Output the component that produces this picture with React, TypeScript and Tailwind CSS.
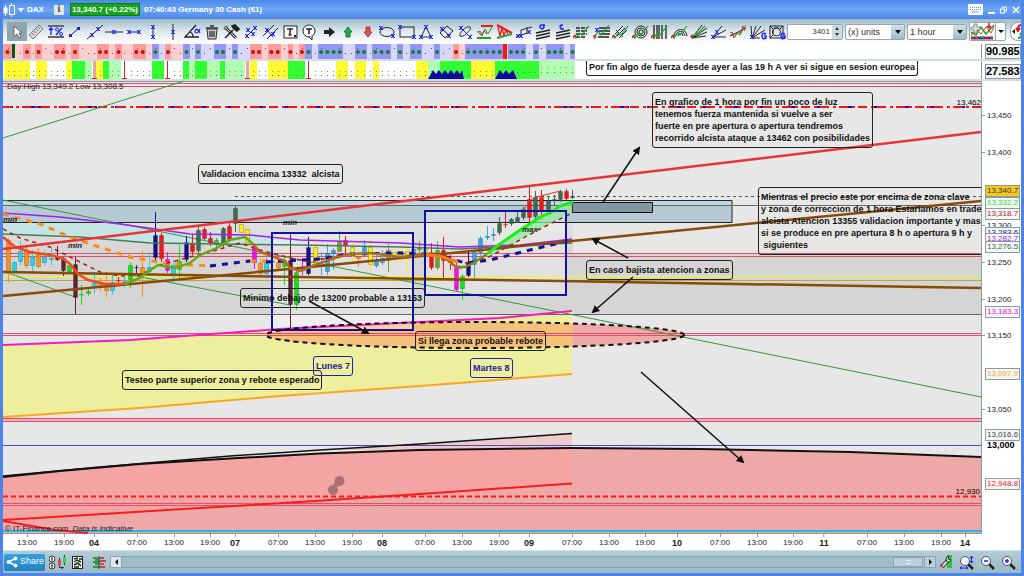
import type { ReactNode } from "react";
import { useState } from "react";

const PLOT = { x: 3, y: 81, w: 978, h: 453 };

const left = (x: number) => `${((x - PLOT.x) / PLOT.w) * 100}%`;
const top = (y: number) => `${((y - PLOT.y) / PLOT.h) * 100}%`;

// ── Toolbar glyphs ──────────────────────────────────────────────
const K = "#222";
const B = "#1a22ff";
const G = "#17a52a";
const R = "#f01818";

const Node = ({ x, y }: { x: number; y: number }) => (
  <path d={`M${x - 2} ${y - 2}l4 4M${x + 2} ${y - 2}l-4 4M${x} ${y - 2}v4`} stroke={B} strokeWidth="1" />
);

const Zig = ({ d = "M0 14l2-2 1 2 3-5 3 2 7-9" }: { d?: string }) => (
  <>
    <path d={d} stroke={G} strokeWidth="1.2" />
    <path d="M0 13l2-2 1 3" stroke={R} strokeWidth="1.2" />
  </>
);

const TOOLS: { name: string; art: ReactNode }[] = [
  { name: "Pointer", art: <path d="M6 2v11l3-3 2 4 2-1-2-4h3z" fill="#fff" stroke="#666" /> },
  {
    name: "Ruler",
    art: (
      <>
        <path d="M2 11L12 1l4 4L6 15z" fill="#d6d6d6" stroke="#777" />
        <path d="M5 9l2 2M7 7l2 2M9 5l2 2M11 3l2 2" stroke="#777" />
      </>
    ),
  },
  {
    name: "Percentage",
    art: (
      <>
        <path d="M1 2h16M1 13h16" stroke="#666" strokeWidth="2" />
        <path d="M4 4v7M2 6l2-2 2 2M9 11l6-7" stroke={B} strokeWidth="1.3" />
        <circle cx="10" cy="5.500" r="1.500" stroke={B} />
        <circle cx="14" cy="10" r="1.500" stroke={B} />
      </>
    ),
  },
  { name: "Segment", art: <><path d="M5 11l8-7" stroke={K} /><path d="M3 10h3v3H3zM11 3h3v3h-3z" fill={B} /></> },
  { name: "Line", art: <><path d="M1 15L17 1" stroke={K} /><Node x={6} y={11} /><Node x={12} y={5} /></> },
  { name: "Horizontal line", art: <><path d="M0 8h18" stroke={K} /><Node x={9} y={8} /></> },
  { name: "Horizontal segment", art: <><path d="M4 8h10" stroke={K} /><Node x={4} y={8} /><Node x={14} y={8} /></> },
  { name: "Vertical segment", art: <><path d="M9 3v10" stroke={K} /><Node x={9} y={3} /><Node x={9} y={13} /></> },
  { name: "Vertical line", art: <><path d="M9 0v16" stroke={K} /><Node x={9} y={8} /></> },
  {
    name: "Angle",
    art: (
      <>
        <path d="M13 1L2 13h14M7 8q3 1 3 5" stroke={K} strokeWidth="1.3" />
        <path d="M17 5c-3 6-5 4-5 2s3-3 5 2" stroke={B} strokeWidth="1.2" />
      </>
    ),
  },
  {
    name: "Delete",
    art: (
      <>
        <path d="M4 5h10l-1 10H5z" fill="#ccc" stroke="#333" />
        <path d="M3 4h12M7 2h4M7 7v6M9 7v6M11 7v6" stroke="#333" strokeWidth="1.3" />
      </>
    ),
  },
  {
    name: "Settings",
    art: (
      <>
        <path d="M4 4l10 10" stroke="#333" strokeWidth="3" />
        <path d="M4 4l10 10" stroke="#ddd" />
        <path d="M10 2l3-1 4 4-2 2-3-2zM11 6l-8 8" fill={K} stroke={K} strokeWidth="1.600" />
        <path d="M2 5q0-3 3-3v3z" fill="#ccc" stroke="#555" />
      </>
    ),
  },
  { name: "Regression", art: <><path d="M3 14L15 2" stroke={K} /><Node x={6} y={6} /><Node x={13} y={4} /><Node x={5} y={12} /><Node x={11} y={10} /></> },
  { name: "Channel", art: <><path d="M2 12L13 1M6 15L17 4" stroke={K} /><path d="M6 6l6 7" stroke={B} /><Node x={6} y={6} /><Node x={12} y={10} /></> },
  {
    name: "Text",
    art: (
      <>
        <rect x="3" y="2" width="13" height="12" fill="#fff" stroke={K} />
        <path d="M6 5h6M9 5v6M7.500 11h3" stroke={K} strokeWidth="1.500" />
        <path d="M13 12h2" stroke={K} strokeWidth="2" />
      </>
    ),
  },
  {
    name: "Balloon",
    art: (
      <>
        <circle cx="9" cy="7" r="6" fill="#fff" stroke={K} />
        <path d="M9 13l3 3v-4" fill="#fff" stroke={K} />
        <path d="M6 5h6M9 5v5" stroke={K} strokeWidth="1.600" />
      </>
    ),
  },
  { name: "Right arrow", art: <path d="M4 6h5V3l6 5-6 5v-3H4z" fill={K} /> },
  { name: "Up arrow", art: <path d="M9 3l4 5h-2v5H7V8H5z" fill="#22b04a" stroke="#157a30" /> },
  { name: "Down arrow", art: <path d="M9 13l4-5h-2V3H7v5H5z" fill="#e0505c" stroke="#b03040" /> },
  { name: "Ellipse", art: <><ellipse cx="9" cy="8" rx="7" ry="4.500" stroke={K} /><Node x={3} y={4} /><Node x={15} y={12} /></> },
  { name: "Rectangle", art: <><rect x="2" y="3" width="14" height="10" stroke={K} /><Node x={2} y={3} /><Node x={16} y={13} /></> },
  { name: "Triangle", art: <><path d="M9 3l5 10H4z" stroke={K} /><Node x={9} y={3} /><Node x={14} y={13} /><Node x={4} y={13} /></> },
  { name: "Rotated rectangle", art: <><path d="M10 2l6 5-8 7-5-5zM5 5l8 7" stroke={K} /><Node x={5} y={5} /><Node x={12} y={12} /></> },
  { name: "Rotated ellipse", art: <><path d="M14 3c2 2-2 5-4 7s-5 3-6 2 1-4 3-6 5-4 7-3z" stroke={K} /><path d="M5 4l9 9" stroke={B} /><Node x={5} y={4} /><Node x={14} y={13} /></> },
  { name: "Auto trend", art: <><path d="M5 2h12" stroke={R} strokeWidth="2" /><path d="M1 14h14" stroke={G} strokeWidth="2" /><path d="M1 8l3-1 2 5 3-7 3 5 4-7" stroke={G} /><path d="M2 8l3 3 3-4 3 3" stroke={R} /></> },
  { name: "Auto triangle", art: <><path d="M2 1l15 8" stroke={R} strokeWidth="2" /><path d="M2 14l15-4" stroke={G} strokeWidth="2" /><path d="M3 3l2 9 2-8 2 7 2-5 2 4" stroke={R} strokeWidth="1.300" /></> },
  { name: "Parallel segments", art: <><path d="M6 6l11-3M1 13l11-4M6 6v6M12 3v6" stroke={K} /><Node x={6} y={12} /><Node x={14} y={8} /><Node x={3} y={12} /></> },
  { name: "Standard deviation", art: <><path d="M2 9l14-3M2 12l14-3M2 15l14-3" stroke={K} strokeWidth="1.300" /><path d="M11 1H7a2 2 0 1 0 2 0" stroke={B} strokeWidth="1.500" /></> },
  { name: "Standard error", art: <><path d="M2 9l14-3M2 12l14-3M2 15l14-3" stroke={K} strokeWidth="1.300" /><path d="M9 1H7q-2 1 0 2-2 1 0 2h3" stroke={B} strokeWidth="1.300" /></> },
  { name: "Fibonacci retracement", art: <><path d="M3 4h11M3 7h11M3 10h11M3 13h9" stroke={K} strokeWidth="1.300" strokeDasharray="4 1" /><Zig /></> },
  { name: "Fibonacci extension", art: <><path d="M6 4h11M6 7h11M6 10h11M5 13h11" stroke={K} strokeWidth="1.300" /><Zig d="M1 15l4-8 3 4 8-10" /><Node x={4} y={6} /></> },
  { name: "Fibonacci channel", art: <><path d="M3 10l8-8M5 12l8-8M7 14l8-8M4 6l7 7" stroke={K} /><Zig /></> },
  { name: "Fibonacci circles", art: <><circle cx="9" cy="8" r="6" stroke={K} /><circle cx="9" cy="8" r="4" stroke={K} /><circle cx="9" cy="8" r="2" stroke={K} /><Zig /></> },
  { name: "Fibonacci time zones", art: <><path d="M3 1v14M6 1v14M8 1v14M11 1v14M15 1v14" stroke={K} strokeWidth="1.300" /><Zig /></> },
  { name: "Fibonacci arcs", art: <><path d="M3 12a6 6 0 0 1 13 0M5 12a4 4 0 0 1 9 0M7 12a2 2 0 0 1 5 0" stroke={K} /><Zig /></> },
  { name: "Fibonacci fan", art: <><path d="M2 14L12 1M2 14L17 4M2 14l15-6M2 14l14-2" stroke={K} /><Zig d="M1 14l5-5 1 1L15 2" /></> },
  { name: "Pitchfork", art: <><path d="M3 13L12 2M3 13l13-7M3 13h13" stroke={K} /><Node x={3} y={13} /><Node x={7} y={8} /></> },
  { name: "Linear regression", art: <><path d="M1 12L17 4" stroke={K} /><path d="M1 9l2-1 2 6 3-5 3 2 3-9 2 5" stroke={R} /><path d="M2 10l3 3 4-5 3 1 5-8" stroke={G} /></> },
  { name: "Gann fan", art: <><path d="M3 14L2 2M3 14L7 2M3 14l9-12M3 14l13-8M3 14h8" stroke={K} /><path d="M17 10q-4-2-4 2t4 2v-2h-2" stroke={B} strokeWidth="1.500" /><Node x={3} y={13} /></> },
  { name: "Gann square", art: <><rect x="2" y="2" width="13" height="12" stroke={K} /><circle cx="8.500" cy="8" r="4" stroke={K} /><path d="M2 2l3 3M15 2l-3 3M2 14l3-3M6 4h5M5 6v4" stroke={K} /><path d="M17 10q-4-2-4 2t4 2v-2h-2" stroke={B} strokeWidth="1.500" /></> },
];

// ── Series ──────────────────────────────────────────────────────
const C = {
  o: "#f8921e", c: "#22d3ee", s: "#2fa8e8", b: "#5a2433", l: "#12e312", r: "#f81414", m: "#f012e8",
  n: "#10108c", d: "#3f6b4c", y: "#f8f010", g: "#6aa534",
};

type Candle = [x: number, high: number, low: number, open: number, close: number, tone: keyof typeof C];

const CANDLES: Candle[] = [
  [8, 238, 283, 240, 272, "o"], [14, 261, 273, 262, 272, "c"], [20, 241, 265, 251, 262, "c"],
  [26, 247, 268, 251, 266, "o"], [32, 250, 272, 257, 266, "c"], [38, 248, 268, 254, 267, "o"],
  [44, 250, 265, 257, 263, "c"], [51, 248, 265, 258, 260, "c"], [57, 246, 261, 256, 260, "b"],
  [63, 257, 276, 258, 271, "b"], [69, 263, 273, 265, 272, "l"], [75, 257, 314, 264, 298, "b"],
  [81, 285, 305, 294, 295, "l"], [88, 289, 296, 291, 294, "l"], [94, 272, 294, 283, 288, "c"],
  [100, 278, 291, 283, 287, "o"], [106, 276, 297, 286, 291, "o"], [112, 274, 295, 282, 291, "c"],
  [118, 277, 286, 280, 281, "r"], [124, 276, 288, 281, 283, "c"], [130, 262, 288, 265, 280, "l"],
  [136, 265, 275, 267, 268, "b"], [142, 251, 297, 267, 275, "o"], [149, 252, 275, 267, 272, "c"],
  [155, 212, 260, 235, 258, "n"], [161, 233, 262, 235, 259, "r"], [167, 252, 273, 259, 271, "m"],
  [173, 260, 283, 265, 275, "c"], [179, 245, 278, 261, 270, "l"], [186, 236, 262, 242, 260, "n"],
  [192, 234, 255, 243, 252, "r"], [198, 226, 253, 230, 251, "d"], [204, 227, 240, 229, 239, "r"],
  [210, 232, 246, 238, 244, "r"], [216, 238, 251, 240, 245, "g"], [223, 227, 248, 228, 245, "d"],
  [229, 222, 242, 226, 240, "r"], [235, 206, 232, 208, 224, "d"], [241, 223, 233, 224, 233, "y"],
  [247, 226, 248, 229, 243, "y"], [254, 245, 269, 246, 263, "m"], [260, 259, 276, 263, 274, "o"],
  [266, 258, 275, 261, 274, "c"], [272, 259, 269, 261, 262, "b"], [278, 258, 270, 262, 268, "o"],
  [284, 255, 285, 260, 267, "l"], [290, 232, 330, 260, 305, "b"], [296, 268, 310, 272, 305, "l"],
  [302, 258, 275, 270, 271, "m"], [308, 237, 275, 247, 274, "n"], [315, 237, 265, 247, 263, "y"],
  [321, 252, 275, 258, 259, "s"], [327, 244, 275, 253, 272, "s"], [333, 248, 270, 250, 254, "s"],
  [339, 231, 252, 241, 252, "g"], [345, 236, 256, 240, 246, "r"], [352, 243, 262, 247, 256, "y"],
  [358, 252, 267, 256, 259, "o"], [364, 240, 256, 247, 252, "s"], [370, 240, 270, 247, 265, "y"],
  [376, 252, 268, 260, 266, "s"], [382, 250, 265, 258, 263, "s"], [388, 244, 272, 250, 261, "g"],
  [394, 246, 263, 252, 257, "y"], [400, 244, 262, 251, 258, "y"], [407, 248, 272, 251, 255, "y"],
  [413, 245, 260, 249, 252, "s"], [419, 241, 255, 248, 250, "g"], [425, 244, 258, 249, 255, "y"],
  [431, 243, 270, 252, 268, "r"], [437, 241, 270, 250, 268, "g"], [443, 237, 279, 250, 261, "r"],
  [450, 255, 270, 260, 263, "r"], [456, 262, 292, 267, 290, "m"], [462, 274, 300, 276, 289, "l"],
  [468, 250, 277, 262, 276, "n"], [474, 250, 278, 252, 265, "s"], [480, 236, 262, 238, 253, "s"],
  [487, 226, 240, 236, 238, "s"], [493, 228, 241, 234, 236, "s"], [499, 217, 235, 223, 233, "d"],
  [505, 212, 228, 224, 225, "r"], [511, 218, 226, 219, 224, "d"], [517, 212, 223, 217, 222, "d"],
  [523, 207, 220, 209, 218, "d"], [529, 186, 222, 199, 218, "r"], [535, 191, 220, 197, 217, "d"],
  [541, 190, 220, 197, 212, "r"], [548, 197, 215, 200, 211, "d"], [554, 195, 205, 199, 200, "d"],
  [560, 190, 202, 191, 200, "d"], [566, 189, 200, 191, 199, "r"], [572, 190, 199, 196, 198, "d"],
];

// Pairs of thin parallel levels that cross the whole plot.
const RED_LEVELS = [83, 86, 253, 256, 333, 335, 418, 421, 503, 505];

const TIMES: [number, string][] = [
  [27, "13:00"], [64, "19:00"], [94, "04"], [137, "07:00"], [174, "13:00"], [210, "19:00"], [235, "07"],
  [278, "07:00"], [315, "13:00"], [352, "19:00"], [382, "08"], [425, "07:00"], [462, "13:00"], [499, "19:00"],
  [529, "09"], [572, "07:00"], [609, "13:00"], [645, "19:00"], [677, "10"], [720, "07:00"], [757, "13:00"],
  [793, "19:00"], [824, "11"], [867, "07:00"], [904, "13:00"], [941, "19:00"], [965, "14"],
];

const PRICES: [number, string][] = [
  [115, "13,450"], [152, "13,400"], [225, "13,300"], [262, "13,250"], [299, "13,200"], [335, "13,150"], [409, "13,050"],
];

const TAGS: [number, string, string][] = [
  [232, "13,283.6", "#2020a0"], [238, "13,282.7", "#a020f0"], [246, "13,276.5", "#3f6b3f"],
  [202, "13,332.2", "#2fe02f"], [213, "13,318.7", "#c01818"], [190, "13,340.7", "#333333"],
  [311, "13,183.3", "#f012d0"], [373, "13,097.9", "#ffa520"], [434, "13,016.6", "#444444"], [483, "12,948.8", "#ff1a1a"],
];

type NoteData = { x: number; y: number; lines: string[]; blue?: boolean };

const NOTES: NoteData[] = [
  { x: 652, y: 92, lines: ["En grafico de 1 hora por fin un poco de luz", "tenemos fuerza mantenida si vuelve a ser", "fuerte en pre apertura o apertura tendremos", "recorrido alcista ataque a 13462 con posibilidades"] },
  { x: 198, y: 164, lines: ["Validacion encima 13332  alcista"] },
  { x: 758, y: 187, lines: ["Mientras el precio este por encima de zona clave", "y zona de correccion de 1 hora Estariamos en trade", "alcista Atencion 13355 validacion importante y mas", "si se produce en pre apertura 8 h o apertura 9 h y", " siguientes"] },
  { x: 586, y: 260, lines: ["En caso bajista atencion a zonas"] },
  { x: 240, y: 288, lines: ["Minimo debajo de 13200 probable a 13153"] },
  { x: 415, y: 331, lines: ["Si llega zona probable rebote"] },
  { x: 313, y: 356, lines: ["Lunes 7"], blue: true },
  { x: 470, y: 358, lines: ["Martes 8"], blue: true },
  { x: 122, y: 370, lines: ["Testeo parte superior zona y rebote esperado"] },
];

const SWINGS: [number, number, string][] = [[3, 220, "min"], [68, 246, "min"], [283, 223, "min"], [522, 230, "max"]];

type Seg = [number, number, string];

const TREND: Seg[] = [
  [3, 12, "R"], [23, 31, "R"], [35, 42, "R"], [54, 66, "R"], [71, 79, "R"], [97, 109, "R"], [115, 122, "R"],
  [133, 146, "R"], [152, 159, "B"], [165, 171, "R"], [183, 190, "B"], [195, 201, "B"], [214, 226, "B"],
  [232, 238, "B"], [250, 262, "R"], [268, 281, "R"], [288, 293, "R"], [299, 305, "R"], [305, 312, "B"],
  [318, 343, "B"], [355, 367, "B"], [372, 391, "B"], [397, 403, "B"], [410, 422, "B"], [434, 440, "B"],
  [453, 459, "R"], [465, 503, "B"], [508, 526, "B"], [533, 539, "B"], [546, 564, "B"], [570, 575, "B"],
];

const PHASES: Seg[] = [
  [4, 30, "y"], [36, 47, "y"], [66, 72, "y"], [72, 85, "g"], [85, 92, "l"], [96, 103, "y"], [103, 109, "g"],
  [109, 121, "l"], [152, 164, "g"], [183, 189, "g"], [189, 195, "l"], [195, 207, "g"], [207, 220, "l"],
  [220, 225, "g"], [225, 245, "l"], [250, 257, "y"], [268, 288, "y"], [288, 305, "g"], [336, 348, "y"],
  [355, 366, "y"], [373, 379, "y"], [416, 428, "y"], [428, 440, "l"], [440, 471, "g"], [471, 495, "y"],
  [495, 539, "g"], [539, 575, "l"],
];

const PHASE_FILL: Record<string, string> = { y: "#fffb30", g: "#32ff32", l: "#b0ffb0" };

const BARS = Array.from({ length: 93 }, (_, i) => Math.round(8 + i * 6.13));

function TrendStrip() {
  return (
    <svg viewBox="3 44 978 15" preserveAspectRatio="none" className="absolute inset-0 h-full w-full">
      <rect x="3" y="44" width="149" height="15" fill="#fbcfcf" />
      <rect x="152" y="44" width="422" height="15" fill="#d7d7fb" />
      <path d="M165 44h18v15h-18zM250 44h55v15h-55zM453 44h12v15h-12z" fill="#fbcfcf" />
      {TREND.map(([a, b, k]) => (
        <rect key={a} x={a} y="44" width={b - a} height="15" fill={k === "R" ? "#fd9c9c" : "#9494fb"} />
      ))}
      {BARS.map((x, i) => (
        <path key={x} d={`M${x} ${i % 3 === 0 ? 48 : 53}h1v1h-1z`} fill={x < 152 ? "#b04040" : "#703080"} />
      ))}
      {TREND.flatMap(([a, b, k]) => {
        const n = Math.max(1, Math.round((b - a) / 6.13));
        return Array.from({ length: n }, (_, i) => (
          <ellipse key={`${a}-${i}`} cx={a + ((i + 0.5) * (b - a)) / n} cy="52" rx="2" ry="2" fill={k === "R" ? "#c81010" : "#0a8a1a"} />
        ));
      })}
      <path d="M12 44h3v14h-3z" fill="#0a5a14" />
      <rect x="503" y="44" width="4" height="15" fill="#ff1010" />
    </svg>
  );
}

function PhaseStrip() {
  return (
    <svg viewBox="3 61 978 18" preserveAspectRatio="none" className="absolute inset-0 h-full w-full">
      {PHASES.map(([a, b, k]) => (
        <rect key={a} x={a} y="61" width={b - a} height="18" fill={PHASE_FILL[k]} />
      ))}
      {BARS.map((x, i) => (
        <g key={x}>
          <rect x={x} y={i > 80 ? 67 : 71} width="1" height="1" fill={i % 4 < 2 ? "#e86820" : "#30c8b0"} />
          <rect x={x} y={i > 80 ? 72 : 75} width="1" height="1" fill={i % 5 < 3 ? "#c86020" : "#208040"} />
        </g>
      ))}
      <path d="M93 61h3v18h-3zM246 61h3v18h-3z" fill="#f0a0a0" />
      <path d="M124.500 61v18M167.500 61v18M308.500 61v18M92 78.500h5M122 78.500h5M165 78.500h5M245 78.500h5M306 78.500h5" stroke="#c02828" />
      <path d="M428 79l5-9 3 4 3-4 3 4 3-4 3 4 3-4 3 4 3-4 3 4 2-4 2 9zM495 79l5-9 3 4 3-4 3 4 4-4 4 9z" fill="#0c0c9c" />
    </svg>
  );
}

function PriceDrawing() {
  return (
    <svg viewBox="3 81 978 453" preserveAspectRatio="none" fill="none" className="absolute inset-0 h-full w-full">
      <defs>
        <marker id="head" viewBox="0 0 8 8" refX="6" refY="4" markerWidth="8" markerHeight="8" markerUnits="userSpaceOnUse" orient="auto">
          <path d="M0 0l8 4-8 4z" fill="#111" />
        </marker>
        <clipPath id="past"><rect x="3" y="81" width="570" height="453" /></clipPath>
        <clipPath id="future"><rect x="573" y="81" width="408" height="453" /></clipPath>
        <linearGradient id="band" x1="0" y1="0" x2="0" y2="1">
          <stop offset="0" stopColor="#e0e0e0" />
          <stop offset="1" stopColor="#d4d4d4" />
        </linearGradient>
      </defs>

      {/* zones */}
      <rect x="3" y="223" width="570" height="34" fill="url(#band)" />
      <rect x="3" y="254" width="978" height="60" fill="#d5d5d5" />
      <path d="M3 212L60 217 120 224 160 231 190 234 250 235 310 241 300 245 220 244 150 243 80 237 3 234z" fill="#c4e5e4" />
      <rect x="3" y="201" width="729" height="5" fill="#bcd8e2" />
      <rect x="3" y="206" width="729" height="16" fill="#b6cad4" />
      <path d="M3 345L130 340 280 329 400 323 572 311V374L420 386 280 396 140 408 3 417z" fill="#eeee9f" />
      <path d="M3 477L60 471 140 464 230 458 420 450 572 448 700 449 850 452 981 457V534H3z" fill="#efa8a8" />
      <path d="M3 477L60 471 140 464 230 458 420 450 572 448V484L420 494 300 502 200 508 70 516 3 520z" fill="#f5a4a4" />
      <path d="M320 450L420 444 572 433V448L420 450z" fill="#efcaca" />
      <ellipse cx="475" cy="335" rx="209" ry="13" fill="#f5c07a" clipPath="url(#past)" />
      <ellipse cx="475" cy="335" rx="209" ry="13" fill="#f0a8a8" clipPath="url(#future)" />
      <rect x="272" y="233" width="141" height="97" fill="#fff" fillOpacity="0.3" />
      <rect x="425" y="211" width="141" height="84" fill="#fff" fillOpacity="0.3" />

      {/* levels */}
      <path d="M3 420H981" stroke="#efb4c0" strokeWidth="2" />
      {RED_LEVELS.map((y) => (
        <path key={y} d={`M3 ${y + 0.5}H981`} stroke="#df4f6c" />
      ))}
      <path d="M3 81.500H981M3 533.500H981" stroke="#8a9ba4" />
      <path d="M3 107H981" stroke="#1818a8" strokeWidth="2" strokeDasharray="10 18" />
      <path d="M3 107H981" stroke="#f01818" strokeWidth="2" strokeDasharray="9 4 3 3" />
      <path d="M235 196.500H981" stroke="#555" strokeDasharray="3 3" />
      <path d="M3 200.500H732V222.500H3" stroke="#222" />
      <path d="M3 205.500H981M3 314.500H981" stroke="#666" />
      <path d="M3 445.500H981" stroke="#4a4ac8" />
      <path d="M3 496.500H981" stroke="#ff1a1a" strokeWidth="2" strokeDasharray="5 3" />
      <path d="M3 531H981" stroke="#28b4e4" strokeWidth="2" />
      <path d="M3 280.500H981" stroke="#b8a840" />
      <path d="M3 276.500H981" stroke="#fafa10" />
      <path d="M572 202.500H652.500V212.500H572.500z" fill="#8496a0" stroke="#111" />

      {/* thin trend lines */}
      <path d="M3 138L184 81M3 200L981 397M3 271L75 297M130 275L290 305" stroke="#2f9a3a" />

      {/* candles */}
      {CANDLES.map(([x, high, low, a, b, tone]) => (
        <g key={x} stroke={C[tone]} fill={C[tone]}>
          <path d={`M${x + 0.5} ${high}V${low}`} />
          <rect x={x - 1.5} y={a + 0.5} width="4" height={Math.max(b - a - 1, 0.5)} stroke="#000" strokeOpacity="0.2" />
        </g>
      ))}

      {/* averages */}
      <path d="M487 258L500 245 520 230 535 222 540 217 550 213 572 202V212L540 229z" fill="#8ee89a" fillOpacity="0.750" />
      <path d="M3 213L60 217 120 224 190 234 250 235 300 240 400 243 460 247 520 245 572 239" stroke="#a020f0" strokeWidth="1.500" />
      <path d="M3 234L80 237 150 243 220 244 300 245 400 247 460 249 572 243" stroke="#4f7a58" strokeWidth="1.500" />
      <path d="M3 214L40 224 75 239 130 257 170 264 213 266M250 261h20" stroke="#ff8a10" strokeWidth="3" strokeDasharray="6 6" />
      <path d="M210 266L250 261M266 262L320 259 350 254 400 253 440 255 465 263 490 260 530 250 572 240" stroke="#10109c" strokeWidth="3" strokeDasharray="6 6" />
      <path d="M3 229L20 238 50 247 80 262 100 272 120 276 140 275 160 265 190 257 210 252 240 243 260 250 290 258 310 262 340 255M465 263L487 258 540 229 572 213" stroke="#a81818" strokeWidth="1.500" strokeDasharray="4 4" />
      <path d="M3 296L300 268 572 241 981 201M3 272L300 277 560 281 981 288" stroke="#8a4a08" strokeWidth="2.500" />
      <path d="M3 237L15 247 30 252 50 255 62 258 70 264 78 274 88 280 105 284 125 284" stroke="#f24a18" strokeWidth="2.500" />
      <path d="M125 284L140 278 150 270 158 265 175 268 190 263 200 255 215 249 230 240 245 237 252 243" stroke="#62aa14" strokeWidth="2.500" />
      <path d="M252 243L260 252 285 261 290 268 300 271" stroke="#c0641c" strokeWidth="2.500" />
      <path d="M300 271L315 265 335 258 350 254 370 253 400 257 430 254 445 258 455 266 462 268" stroke="#a8701c" strokeWidth="2.500" />
      <path d="M425 255L440 256 458 262" stroke="#ff7a14" strokeWidth="3" />
      <path d="M458 267L465 267 475 262 487 254" stroke="#7c8a14" strokeWidth="2.500" />
      <path d="M487 254L500 244 520 230 533 222 540 217 550 213 560 206 573 202" stroke="#18ee18" strokeWidth="3" />
      <path d="M523 210L533 198 560 191" stroke="#e03030" />
      <path d="M3 249L981 132" stroke="#e83434" strokeWidth="2.500" />
      <path d="M3 345L130 340 280 329 400 323 500 318 572 311" stroke="#f818c8" strokeWidth="2" />
      <path d="M3 417L140 408 280 396 420 386 572 374" stroke="#fba61c" strokeWidth="2" />
      <path d="M3 476L100 467 230 456 320 450 420 444 572 433.500" stroke="#111" strokeWidth="1.500" />
      <path d="M3 477L60 471 140 464 230 458.500 320 453.500 420 450 572 448 700 449 850 452 981 457" stroke="#111" strokeWidth="2" />
      <path d="M3 520L70 516 200 508 300 502 420 494 572 483.500M3 521L55 530 88 533" stroke="#f81c1c" strokeWidth="2" />

      {/* frames and arrows */}
      <path d="M272 233h141v97h-141zM425 211h141v84h-141z" stroke="#1010a0" strokeWidth="2" />
      <ellipse cx="475" cy="335" rx="209" ry="13" stroke="#111" strokeWidth="2" strokeDasharray="5 4" />
      <g stroke="#111" strokeWidth="1.500">
        <path d="M603 202L639 148" markerEnd="url(#head)" />
        <path d="M628 258L593 239" markerEnd="url(#head)" />
        <path d="M633 277L593 312" markerEnd="url(#head)" />
        <path d="M641 372L743 462" markerEnd="url(#head)" />
        <path d="M309 301L368 333" markerEnd="url(#head)" />
      </g>
      <path d="M340 476a5 5 0 1 1-1 10l-2 1a5 5 0 1 1-4-2l2-2a5 5 0 0 1 5-7z" fill="#a87272" />
    </svg>
  );
}

function Note({ note }: { note: NoteData }) {
  return (
    <p
      className={`absolute whitespace-pre rounded-[3px] border px-0.5 py-[3px] text-[9px] leading-3 font-bold ${
        note.blue ? "border-[#2222a0] text-[#1a1a9c]" : "border-[#222] text-[#111]"
      }`}
      style={{ left: left(note.x), top: top(note.y) }}
    >
      {note.lines.join("\n")}
    </p>
  );
}

function PriceAxis() {
  return (
    <div className="relative w-10 shrink-0 border-l border-[#8a9ba4] bg-white">
      {PRICES.map(([y, label]) => (
        <span key={label} className="absolute left-0 flex -translate-y-1/2 items-center gap-0.5 text-[8px] leading-3 text-[#222] before:h-px before:w-[3px] before:bg-[#8a9ba4]" style={{ top: top(y + 0.5) }}>
          {label}
        </span>
      ))}
      <span className="absolute left-[5px] -translate-y-1/2 text-[9px] leading-3 font-bold text-black" style={{ top: top(445) }}>13,000</span>
      {TAGS.map(([y, label, color]) => (
        <span
          key={label}
          className={`absolute left-[3px] -translate-y-1/2 border border-[#8a9ba4] px-px text-[8px] leading-[10px] ${label === "13,340.7" ? "bg-[#f5c91c]" : "bg-[#f4f6f6]"}`}
          style={{ top: top(y + 0.5), color }}
        >
          {label}
        </span>
      ))}
    </div>
  );
}

function TitleBar() {
  return (
    <header className="flex h-[19px] items-center bg-linear-to-b from-[#4a88e8] via-[#6ea6f8] to-[#4d86e6] text-[8px] font-bold text-white">
      <svg width="13" height="14" viewBox="0 0 13 14" fill="none" stroke="#fff">
        <path d="M2.500 2v11" /><rect x="1" y="5" width="3" height="5" fill="#fff" />
        <path d="M8.500 0v2M8.500 12v2" /><rect x="6.500" y="2.500" width="5" height="9" />
      </svg>
      <button type="button" aria-label="Open instrument menu" className="ml-0.5 border-x-[3px] border-t-[4px] border-x-transparent border-t-white" />
      <span className="ml-[3px]">DAX</span>
      <button type="button" aria-label="Information" className="ml-2.5 flex h-[10px] w-[10px] items-center justify-center bg-[#e4e4e4] font-serif text-[9px] text-[#333]">i</button>
      <span className="ml-1.5 border border-[#0c7c14] bg-[#16a41c] px-px leading-[11px]">13,340.7 (+0.22%)</span>
      <span className="ml-1">07:40:43 Germany 30 Cash (€1)</span>
      <div className="mr-px ml-auto flex items-center gap-[5px]">
        <button type="button" aria-label="Keyboard">
          <svg width="15" height="11" viewBox="0 0 15 11"><rect width="15" height="11" rx="1" fill="#fff" /><path d="M2 3.500h11M2 5.500h11" stroke="#5a90e8" strokeDasharray="1 1" /><path d="M4 8h7" stroke="#5a90e8" /></svg>
        </button>
        <button type="button" aria-label="Minimize">
          <svg width="7" height="8" viewBox="0 0 7 8"><path d="M0 7h7" stroke="#fff" strokeWidth="2" /></svg>
        </button>
        <button type="button" aria-label="Restore">
          <svg width="7" height="8" viewBox="0 0 7 8" fill="none" stroke="#fff"><path d="M2.500 2V1h4v4H5" /><rect x=".5" y="3" width="4" height="4" /></svg>
        </button>
        <button type="button" aria-label="Close">
          <svg width="8" height="8" viewBox="0 0 8 8"><path d="M1 1l6 6M7 1L1 7" stroke="#fff" strokeWidth="1.500" /></svg>
        </button>
      </div>
    </header>
  );
}

function Picker({ label, value, options }: { label: string; value: string; options: string[] }) {
  const [current, setCurrent] = useState(value);
  return (
    <div className="relative h-4 w-[60px]">
      <select aria-label={label} value={current} onChange={(e) => setCurrent(e.target.value)} className="block h-4 w-full appearance-none rounded-xs border border-[#93a7b1] bg-white pl-0.5 text-[9px] leading-3 text-[#333]">
        {options.map((o) => <option key={o}>{o}</option>)}
      </select>
      <span className="pointer-events-none absolute top-px right-px flex h-[14px] w-[13px] items-center justify-center bg-linear-to-b from-[#d2e2ea] to-[#9dbac8]">
        <span className="border-x-[3px] border-t-[4px] border-x-transparent border-t-[#111]" />
      </span>
    </div>
  );
}

function Toolbar() {
  const [tool, setTool] = useState("Pointer");
  const [units, setUnits] = useState("3401");
  return (
    <div className="flex h-[25px] items-center bg-linear-to-b from-[#9fbbc8] via-[#dfe9ee] to-white pl-1">
      <div className="flex min-w-0 flex-1">
        {TOOLS.map((t) => (
          <button
            key={t.name}
            type="button"
            aria-label={t.name}
            aria-pressed={tool === t.name}
            onClick={() => setTool(t.name)}
            className={`flex h-[19px] flex-1 items-center justify-center ${tool === t.name ? "bg-[#8fa5b0]" : ""}`}
          >
            <svg width="18" height="16" viewBox="0 0 18 16" fill="none">{t.art}</svg>
          </button>
        ))}
      </div>
      <div className="flex w-[234px] shrink-0 items-center gap-0.5">
        <div className="relative h-4 w-[56px]">
          <input aria-label="Number of units" value={units} onChange={(e) => setUnits(e.target.value)} className="block h-4 w-full rounded-xs border border-[#93a7b1] bg-white pr-3 text-right text-[8px] leading-3 text-[#333]" />
          <span className="pointer-events-none absolute top-px right-px flex h-[14px] w-[10px] flex-col items-center justify-evenly bg-[#c8dae2]">
            <span className="border-x-[2px] border-b-[3px] border-x-transparent border-b-[#333]" />
            <span className="border-x-[2px] border-t-[3px] border-x-transparent border-t-[#333]" />
          </span>
        </div>
        <Picker label="Unit type" value="(x) units" options={["(x) units", "days"]} />
        <Picker label="Timeframe" value="1 hour" options={["1 hour", "4 hours", "1 day"]} />
        <div className="flex h-[19px] rounded-xs border border-[#93a7b1] bg-white">
          <button type="button" aria-label="Add indicator">
            <svg width="25" height="17" viewBox="0 0 25 17" fill="none">
              <path d="M1 9l5 3 5-8 5 7 8-9" stroke="#22a02c" strokeWidth="1.500" />
              <path d="M1 13l5-7 5 5 5-7 5 6 3-6" stroke="#e83030" />
              <path d="M4 1h3v3h3v3H7v3H4V7H1V4h3z" fill="#ddd" stroke="#888" />
              <path d="M19 0v5M17 3l2 2 2-2" stroke="#e01818" strokeWidth="1.500" />
              <path d="M1 15h3M6 15h3M15 15h3M20 15h3" stroke="#e01818" strokeWidth="3" />
              <path d="M4 15h2M9 15h6M18 15h2" stroke="#1a32e0" strokeWidth="3" />
              <path d="M5 14h2M11 14h3" stroke="#18c028" strokeWidth="2" />
            </svg>
          </button>
          <button type="button" aria-label="Indicator list" className="flex w-[10px] items-center justify-center border-l border-[#93a7b1]">
            <span className="border-x-[3px] border-t-[3px] border-x-transparent border-t-[#111]" />
          </button>
        </div>
        <button type="button" aria-label="Trading panel" className="ml-0.5 flex h-[19px] flex-1 overflow-hidden rounded-l-lg border border-r-0 border-[#93a7b1] bg-white">
          <svg width="12" height="17" viewBox="0 0 12 17" fill="none" className="shrink-0">
            <path d="M4 6v5L1 8.500z" fill="#111" />
            <path d="M11 2q-4 0-4 4M5 5l2 3 2-3" stroke="#e01818" strokeWidth="2" />
            <path d="M7 15q4 0 4-4M9 12l2-3 1 3" stroke="#18a828" strokeWidth="2" />
          </svg>
        </button>
      </div>
    </div>
  );
}

function Magnifier({ children }: { children?: ReactNode }) {
  return (
    <svg width="15" height="15" viewBox="0 0 15 15" fill="none">
      <path d="M9 9l5 5" stroke="#222" strokeWidth="2.500" />
      <circle cx="6" cy="6" r="4.500" fill="#f0f4f6" stroke="#555" />
      {children}
    </svg>
  );
}

function Footer() {
  return (
    <footer className="flex h-[23px] items-center border-t border-[#d6e2e8] bg-linear-to-b from-[#b2ccd8] to-[#9cb9c6] px-px">
      <button type="button" className="flex h-[17px] w-[41px] items-center gap-0.5 rounded-xs bg-linear-to-b from-[#35a0dc] to-[#2383c4] pl-0.5 text-[9px] text-white">
        <svg width="12" height="12" viewBox="0 0 12 12" fill="#fff" stroke="#fff">
          <path d="M9.500 2.500l-7 3.500 7 3.500" fill="none" strokeWidth="1.500" />
          <circle cx="9.500" cy="2.500" r="1.500" /><circle cx="2.500" cy="6" r="1.500" /><circle cx="9.500" cy="9.500" r="1.500" />
        </svg>
        Share
      </button>
      <div className="ml-1 flex items-center gap-1.5">
        <button type="button" aria-label="Chart style">
          <svg width="17" height="15" viewBox="0 0 17 15" fill="none">
            <circle cx="3" cy="4" r="3" fill="#fff" stroke="#333" /><circle cx="3" cy="11" r="3" fill="#fff" stroke="#333" />
            <path d="M3 2v4M2 4h2M3 9v4M2 11h2" stroke="#333" />
            <path d="M10.500 3v10M15.500 0v10" stroke="#333" />
            <rect x="9" y="5" width="3" height="5" fill="#e84050" /><rect x="14" y="2" width="3" height="6" fill="#2cd83c" />
            <path d="M11 12h4l-2 2z" fill="#111" />
          </svg>
        </button>
        <button type="button" aria-label="Screenshot" className="mr-1">
          <svg width="11" height="13" viewBox="0 0 11 13" fill="none">
            <rect x=".5" y=".5" width="10" height="12" fill="#fff" stroke="#222" />
            <path d="M2 3l4-1M2 6l3-2 4 2M2 9l4-2 3 3M2 11h5M7 3h3" stroke="#222" strokeWidth="1.500" />
            <path d="M3 5l4 5" stroke="#18a030" />
          </svg>
        </button>
        <button type="button" aria-label="Order book">
          <svg width="13" height="13" viewBox="0 0 13 13">
            <path d="M0 2h5M2 4h4M0 6h7M2 8h4M0 11h7" stroke="#2c9c3c" strokeWidth="2" />
            <path d="M6 2h5M7 5h6M7 8h4M7 11h5" stroke="#c84450" strokeWidth="2" />
            <path d="M6 0v13" stroke="#333" />
          </svg>
        </button>
      </div>
      <button type="button" aria-label="Scroll left" className="ml-1 flex h-3 w-3 items-center justify-center border border-[#8ba6b2] bg-[#dce8ee]">
        <span className="border-y-[3px] border-r-[3px] border-y-transparent border-r-[#111]" />
      </button>
      <div className="flex h-3 flex-1 justify-end border-y border-[#86a3b0] bg-[#9ebbc8]">
        <span className="flex w-[30px] items-center justify-center border border-[#8ba6b2] bg-[#b9d0da]">
          <span className="h-1 w-[5px] border-y border-[#e6eff3]" />
        </span>
      </div>
      <button type="button" aria-label="Scroll right" className="ml-px flex h-3 w-3 items-center justify-center border border-[#8ba6b2] bg-[#b9d0da]">
        <span className="border-y-[3px] border-l-[3px] border-y-transparent border-l-[#111]" />
      </button>
      <div className="mr-1 ml-1 flex items-center gap-1.5">
        <button type="button" aria-label="Chart settings">
          <svg width="13" height="14" viewBox="0 0 13 14">
            <path d="M7 0h5v13H7z" fill="#28c83c" />
            <path d="M2 12l6-7" stroke="#333" strokeWidth="4" /><path d="M2 12l6-7" stroke="#ddd" strokeWidth="2" />
            <path d="M6 4q0-3 3-3l-1 3 3 1q-1 3-4 2z" fill="#ddd" stroke="#333" />
            <path d="M0 9h3v3H0z" fill="#c84850" />
          </svg>
        </button>
        <button type="button" aria-label="Fit view">
          <Magnifier><path d="M12.500 1v7M11 3l1.500-2L14 3M11 6l1.500 2L14 6M1 13h8M3 11l-2 2 2 1M7 11l2 2-2 1" stroke="#1a22ff" /></Magnifier>
        </button>
        <button type="button" aria-label="Zoom out">
          <Magnifier><path d="M4 6h4" stroke="#1a22ff" strokeWidth="1.500" /></Magnifier>
        </button>
        <button type="button" aria-label="Zoom in">
          <Magnifier><path d="M4 6h4M6 4v4" stroke="#1a22ff" strokeWidth="1.500" /></Magnifier>
        </button>
      </div>
    </footer>
  );
}

export default function App() {
  return (
    <div className="flex min-h-screen flex-col border-x-[3px] border-b-[3px] border-[#4c84e8] bg-[#d3dce1] font-['Liberation_Sans',sans-serif]">
      <TitleBar />
      <Toolbar />

      {/* ── Indicators ───────────────────────────────────────── */}
      <section className="mb-0.5 flex h-[15px]">
        <div className="relative flex-1 bg-white"><TrendStrip /></div>
        <div className="w-10 border-l border-[#8a9ba4] bg-white pl-[3px]">
          <span className="block border border-[#8a9ba4] bg-[#f4f6f6] text-[11px] leading-[13px] font-bold">90.985</span>
        </div>
      </section>
      <section className="mb-0.5 flex h-[18px]">
        <div className="relative flex-1 overflow-hidden bg-white">
          <PhaseStrip />
          <p className="absolute top-0 rounded-b-[3px] border border-t-0 border-[#222] px-0.5 pb-0.5 text-[9px] leading-3 font-bold whitespace-nowrap text-[#111]" style={{ left: left(586) }}>
            Por fin algo de fuerza desde ayer a las 19 h A ver si sigue en sesion europea
          </p>
        </div>
        <div className="w-10 border-l border-[#8a9ba4] bg-white pt-[3px] pl-[3px]">
          <span className="block border border-[#8a9ba4] bg-[#f4f6f6] text-[11px] leading-[13px] font-bold">27.583</span>
        </div>
      </section>

      {/* ── Price chart ──────────────────────────────────────── */}
      <main className="flex flex-1">
        <div className="relative min-h-[453px] flex-1 overflow-hidden bg-[#e7e7e7]">
          <PriceDrawing />
          <p className="absolute top-px left-1 text-[8px] leading-[10px] text-[#222]">Day:High 13,349.2 Low 13,308.5</p>
          {SWINGS.map(([x, y, label]) => (
            <span key={x} className="absolute -translate-y-1/2 text-[8px] leading-[10px] font-bold text-[#222] italic" style={{ left: left(x), top: top(y) }}>{label}</span>
          ))}
          {NOTES.map((note) => <Note key={note.x} note={note} />)}
          <span className="absolute right-0 -translate-y-1/2 text-[8px] leading-[10px] text-black" style={{ top: top(103) }}>13,462</span>
          <span className="absolute right-px -translate-y-1/2 text-[8px] leading-[10px] text-black" style={{ top: top(492) }}>12,930</span>
          <p className="absolute bottom-0 left-0.5 text-[8px] leading-[10px] text-[#222]">
            © IT-Finance.com <em className="ml-0.5">Data is indicative</em>
          </p>
        </div>
        <PriceAxis />
      </main>

      {/* ── Time axis ────────────────────────────────────────── */}
      <div className="flex h-4 bg-white">
        <div className="relative flex-1">
          {TIMES.map(([x, label]) => (
            <span
              key={x}
              className={`absolute top-0 flex -translate-x-1/2 flex-col items-center leading-3 text-[#222] before:h-[3px] before:w-px before:bg-[#8a9ba4] ${label.length === 2 ? "text-[9px] font-bold" : "text-[8px]"}`}
              style={{ left: left(x) }}
            >
              {label}
            </span>
          ))}
        </div>
        <div className="w-10" />
      </div>

      <Footer />
    </div>
  );
}
